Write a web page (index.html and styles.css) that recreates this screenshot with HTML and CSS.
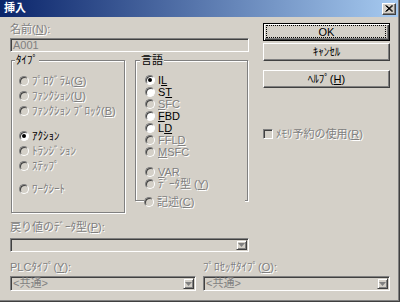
FILE: index.html
```html
<!DOCTYPE html>
<html lang="ja">
  <head>
    <meta charset="UTF-8" />
    <title>挿入</title>
    <link rel="stylesheet" href="styles.css">
  </head>
  <body>
    <div class="dialog">
      <div class="titlebar">
        <span class="title">挿入</span>
        <span class="close-button">
          <svg width="8" height="7" viewBox="0 0 8 7">
            <path d="M0.5 0.5 L7 6.5 M1.5 0.5 L8 6.5 M7 0.5 L0.5 6.5 M8 0.5 L1.5 6.5" stroke="#000" stroke-width="1" fill="none"/>
          </svg>
        </span>
      </div>

      <div class="client">
        <div class="top">
          <div class="left-column">
            <div class="field-label disabled">名前(<u>N</u>):</div>
            <div class="edit disabled">A001</div>

            <div class="groups">
              <div class="group type-group">
                <span class="legend">ﾀｲﾌﾟ</span>
                <div class="option disabled"><span class="radio"></span><span>ﾌﾟﾛｸﾞﾗﾑ(<u>G</u>)</span></div>
                <div class="option disabled"><span class="radio"></span><span>ﾌｧﾝｸｼｮﾝ(<u>U</u>)</span></div>
                <div class="option disabled"><span class="radio"></span><span>ﾌｧﾝｸｼｮﾝ ﾌﾞﾛｯｸ(<u>B</u>)</span></div>
                <div class="option spaced"><span class="radio enabled checked"></span><span>ｱｸｼｮﾝ</span></div>
                <div class="option disabled"><span class="radio"></span><span>ﾄﾗﾝｼﾞｼｮﾝ</span></div>
                <div class="option disabled"><span class="radio"></span><span>ｽﾃｯﾌﾟ</span></div>
                <div class="option disabled spaced-small"><span class="radio"></span><span>ﾜｰｸｼｰﾄ</span></div>
              </div>

              <div class="group lang-group">
                <span class="legend">言語</span>
                <div class="option small"><span class="radio enabled checked"></span><span>I<u>L</u></span></div>
                <div class="option small"><span class="radio enabled"></span><span>S<u>T</u></span></div>
                <div class="option small disabled"><span class="radio"></span><span><u>S</u>FC</span></div>
                <div class="option small"><span class="radio enabled"></span><span><u>F</u>BD</span></div>
                <div class="option small"><span class="radio enabled"></span><span>L<u>D</u></span></div>
                <div class="option small disabled"><span class="radio"></span><span>FFL<u>D</u></span></div>
                <div class="option small disabled"><span class="radio"></span><span><u>M</u>SFC</span></div>
                <div class="option small disabled spaced-small"><span class="radio"></span><span><u>V</u>AR</span></div>
                <div class="option small disabled"><span class="radio"></span><span>ﾃﾞｰﾀ型 (<u>Y</u>)</span></div>
                <div class="option small disabled description"><span class="radio"></span><span>記述(<u>C</u>)</span></div>
              </div>
            </div>
          </div>

          <div class="right-column">
            <button class="btn btn-default">OK</button>
            <button class="btn cancel-button">ｷｬﾝｾﾙ</button>
            <button class="btn help-button">ﾍﾙﾌﾟ(<u>H</u>)</button>
            <div class="check-row disabled"><span class="checkbox"></span><span>ﾒﾓﾘ予約の使用(<u>R</u>)</span></div>
          </div>
        </div>

        <div class="field-label disabled return-label">戻り値のﾃﾞｰﾀ型(<u>P</u>):</div>
        <div class="combo combo-wide">
          <span class="combo-text"></span>
          <span class="drop-button">
            <svg width="7" height="4" viewBox="0 0 7 4"><path d="M0 0 H7 L3.5 4 Z" fill="#808080"/></svg>
          </span>
        </div>

        <div class="bottom-row">
          <div>
            <div class="field-label disabled">PLCﾀｲﾌﾟ(<u>Y</u>):</div>
            <div class="combo combo-small">
              <span class="combo-text">&lt;共通&gt;</span>
              <span class="drop-button">
                <svg width="7" height="4" viewBox="0 0 7 4"><path d="M0 0 H7 L3.5 4 Z" fill="#808080"/></svg>
              </span>
            </div>
          </div>
          <div>
            <div class="field-label disabled">ﾌﾟﾛｾｯｻﾀｲﾌﾟ(<u>O</u>):</div>
            <div class="combo combo-small">
              <span class="combo-text">&lt;共通&gt;</span>
              <span class="drop-button">
                <svg width="7" height="4" viewBox="0 0 7 4"><path d="M0 0 H7 L3.5 4 Z" fill="#808080"/></svg>
              </span>
            </div>
          </div>
        </div>
      </div>
    </div>
  </body>
</html>
```

FILE: styles.css
```css
body{
  margin: 0;
  background-color: #d4d0c8;
  color: black;
  font-family: "Liberation Sans", "Noto Sans CJK JP", sans-serif;
  font-size: 11px;
}
u{
  text-underline-offset: 1px;
}
.dialog{
  width: 400px;
  height: 302px;
  box-sizing: border-box;
  border-right: 1px solid #404040;
  border-bottom: 1px solid #404040;
  box-shadow: inset -1px -1px 0 #808080;
}
.titlebar{
  height: 17px;
  margin-right: 1px;
  padding: 0 2px 0 4px;
  display: flex;
  align-items: center;
  justify-content: space-between;
  background: linear-gradient(to right, #0a246a, #a6caf0);
}
.title{
  color: white;
  font-weight: bold;
  line-height: 17px;
}
.close-button{
  width: 14px;
  height: 12px;
  box-sizing: border-box;
  background-color: #d4d0c8;
  border: 1px solid;
  border-color: #fff #404040 #404040 #fff;
  box-shadow: inset -1px -1px 0 #808080;
  display: flex;
  align-items: center;
  justify-content: center;
}
.close-button svg{
  display: block;
}
.client{
  padding: 6px 0 0 10px;
}
.top{
  display: grid;
  grid-template-columns: 239px 127px;
  column-gap: 14px;
  align-items: start;
}
.disabled{
  color: #808080;
  text-shadow: 1px 1px 0 #fff;
}
.field-label{
  height: 12px;
  line-height: 12px;
  white-space: nowrap;
}
.edit{
  margin-top: 3px;
  height: 14px;
  box-sizing: border-box;
  border: 1px solid;
  border-color: #808080 #fff #fff #808080;
  box-shadow: inset 1px 1px 0 #404040, inset -1px -1px 0 #d4d0c8;
  padding-left: 2px;
  line-height: 12px;
  text-shadow: none;
}
.groups{
  margin-top: 8px;
  padding-left: 1px;
  display: flex;
  gap: 10px;
  align-items: flex-start;
}
.group{
  position: relative;
  box-sizing: border-box;
  border: 1px solid #808080;
  box-shadow: inset 1px 1px 0 #fff, 1px 1px 0 #fff;
}
.type-group{
  width: 114px;
  height: 153px;
  padding: 12px 0 0 7px;
}
.lang-group{
  width: 113px;
  height: 141px;
  padding: 13px 0 0 9px;
}
.legend{
  position: absolute;
  top: -7px;
  left: 3px;
  padding: 0 1px;
  line-height: 12px;
  background-color: #d4d0c8;
}
.lang-group .legend{
  left: 4px;
}
.option{
  height: 15px;
  display: flex;
  align-items: center;
  gap: 3px;
  white-space: nowrap;
  line-height: 12px;
}
.option.small{
  height: 12px;
}
.spaced{
  margin-top: 10px;
}
.spaced-small{
  margin-top: 8px;
}
.description{
  position: absolute;
  left: 8px;
  right: 2px;
  bottom: -8px;
  background-color: #d4d0c8;
}
.radio{
  position: relative;
  flex: none;
  width: 10px;
  height: 10px;
  box-sizing: border-box;
  border-radius: 50%;
  border: 1px solid;
  border-color: #808080 #fff #fff #808080;
  box-shadow: inset 1px 1px 0 #404040;
  background-color: #d4d0c8;
}
.radio.enabled{
  background-color: white;
}
.radio.checked::after{
  content: "";
  position: absolute;
  left: 2px;
  top: 2px;
  width: 4px;
  height: 4px;
  border-radius: 50%;
  background-color: black;
}
.right-column{
  display: flex;
  flex-direction: column;
}
.btn{
  height: 18px;
  padding: 0;
  box-sizing: border-box;
  font-family: inherit;
  font-size: 11px;
  line-height: 12px;
  color: black;
  background-color: #d4d0c8;
  border: 1px solid;
  border-color: #fff #404040 #404040 #fff;
  box-shadow: inset -1px -1px 0 #808080;
}
.btn-default{
  position: relative;
  border: 1px solid black;
  box-shadow: inset 1px 1px 0 #fff, inset -1px -1px 0 #404040, inset -2px -2px 0 #808080;
}
.btn-default::after{
  content: "";
  position: absolute;
  left: 2px;
  top: 1px;
  right: 3px;
  bottom: 2px;
  border: 1px dotted black;
}
.cancel-button{
  margin-top: 2px;
}
.help-button{
  margin-top: 9px;
}
.check-row{
  margin-top: 40px;
  height: 12px;
  line-height: 12px;
  display: flex;
  align-items: center;
  gap: 3px;
  white-space: nowrap;
}
.checkbox{
  flex: none;
  width: 10px;
  height: 10px;
  box-sizing: border-box;
  border: 1px solid;
  border-color: #808080 #fff #fff #808080;
  box-shadow: inset 1px 1px 0 #404040;
  background-color: #d4d0c8;
}
.return-label{
  margin-top: 8px;
}
.combo{
  box-sizing: border-box;
  border: 1px solid;
  border-color: #808080 #fff #fff #808080;
  box-shadow: inset 1px 1px 0 #404040, inset -1px -1px 0 #d4d0c8;
  padding: 1px;
  display: flex;
  justify-content: space-between;
}
.combo-wide{
  margin-top: 5px;
  width: 239px;
  height: 14px;
}
.combo-small{
  margin-top: 3px;
  height: 15px;
}
.combo-text{
  color: #808080;
  padding-left: 1px;
  line-height: 11px;
}
.drop-button{
  width: 11px;
  box-sizing: border-box;
  border: 1px solid;
  border-color: #d4d0c8 #404040 #404040 #d4d0c8;
  box-shadow: inset 1px 1px 0 #fff, inset -1px -1px 0 #808080;
  display: flex;
  align-items: center;
  justify-content: center;
}
.bottom-row{
  margin-top: 9px;
  display: grid;
  grid-template-columns: 186px 187px;
  column-gap: 7px;
}
```
